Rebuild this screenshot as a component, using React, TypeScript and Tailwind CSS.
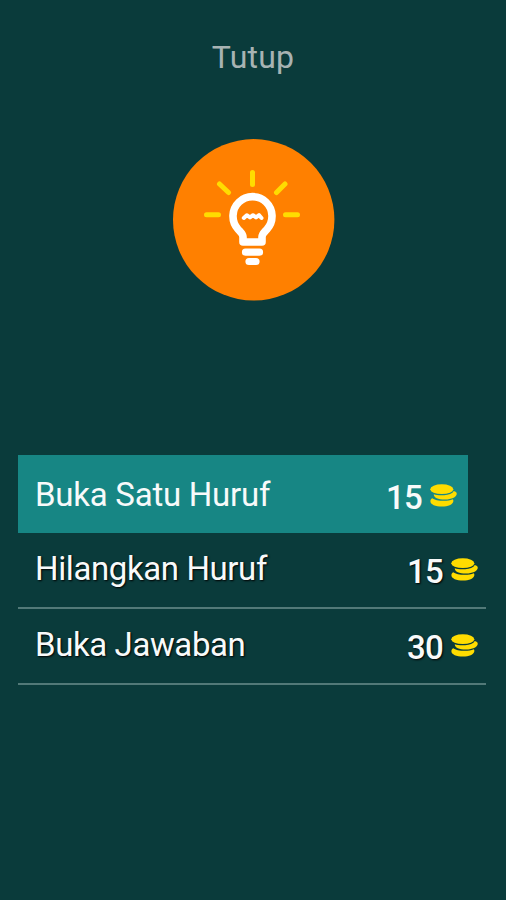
import React from "react";
import clsx from "clsx";

interface HintOption {
  label: string;
  price: number;
  selected?: boolean;
}

const options: HintOption[] = [
  { label: "Buka Satu Huruf", price: 15, selected: true },
  { label: "Hilangkan Huruf", price: 15 },
  { label: "Buka Jawaban", price: 30 },
];

const BulbIcon = () => (
  <svg viewBox="0 0 162 162" className="size-[162px]" fill="none" strokeLinecap="round" strokeLinejoin="round">
    <circle cx="80.7" cy="80.8" r="80.7" fill="#ff8000" />
    {/* Rays */}
    <path
      d="M79.5 33.5V45.5M33.5 75.8H45.5M112.5 75.8H124.5M46.5 45L55.5 53.5M112 45L103.5 53.5"
      stroke="#ffdc00"
      strokeWidth="5"
    />
    {/* Glass */}
    <path
      d="M70 103V98C70 95 68.5 94 65 90.2A19.5 19.5 0 1 1 94 90.2C90.5 94 89 95 89 98V103Z"
      stroke="#fff"
      strokeWidth="7.6"
    />
    {/* Filament */}
    <path d="M70.8 79L73.8 76.2L77 78.4L80 76.2L83 78.4L86 76.2L88.5 79" stroke="#fff" strokeWidth="4" />
    {/* Base */}
    <path d="M72.5 113.2H86.5M76 122.5H83" stroke="#fff" strokeWidth="7.2" />
  </svg>
);

const CoinsIcon = () => (
  <svg viewBox="0 0 27 23" className="h-[23px] w-[27px]" fill="#ffdc00">
    <ellipse cx="11.8" cy="5.2" rx="11.5" ry="4.9" />
    <path d="M3.8 10.2C8 11.8 18 11.7 22.4 8.7C23.2 8.1 23.5 7.6 23.6 7C26 7.4 27 8.6 26.7 10.2C26.2 13.2 21.5 15.4 15.2 15.5C8.5 15.6 3.6 13.6 3.8 10.2Z" />
    <path d="M2.2 14.2C5.5 17 17 17.8 22.8 15.3C23.4 15.9 23.4 16.6 23.3 17.4C22.8 20.4 18 22.6 12 22.6C5.5 22.6 0.4 20.4 0.4 17.2C0.4 15.9 1.1 14.8 2.2 14.2Z" />
  </svg>
);

const OptionRow: React.FC<HintOption> = ({ label, price, selected }) => (
  <button
    type="button"
    className={clsx(
      "flex items-start justify-between pl-[17px] text-[33px] leading-10 text-[#f8fafa]",
      selected
        ? "mr-[18px] h-[78px] bg-[#178684] pt-5 pr-[11px]"
        : "h-[76px] border-b-2 border-[#527978] pt-4 pr-2 [text-shadow:1px_1px_2px_#000]"
    )}
  >
    <span className={selected ? "tracking-[-0.25px]" : "tracking-[-0.4px]"}>{label}</span>
    <span className="flex items-start">
      <span className="mt-[3px] mr-[8px] font-medium tracking-[-0.8px]">{price}</span>
      <span className="mt-[9px]">
        <CoinsIcon />
      </span>
    </span>
  </button>
);

const App: React.FC = () => {
  return (
    <div className="flex h-[900px] w-[506px] flex-col overflow-hidden bg-[#0a3b3b] font-[Roboto,sans-serif]">
      {/* Close */}
      <div className="flex h-[139px] justify-center pt-[37px]">
        <button type="button" className="h-10 text-[32px] leading-10 tracking-[0.2px] text-[#a7b3b3]">
          Tutup
        </button>
      </div>

      <div className="flex h-[316px] justify-center pl-px">
        <BulbIcon />
      </div>

      {/* Options */}
      <div className="flex flex-col pr-5 pl-[18px]">
        {options.map((option) => (
          <OptionRow key={option.label} {...option} />
        ))}
      </div>
    </div>
  );
};

export default App;
